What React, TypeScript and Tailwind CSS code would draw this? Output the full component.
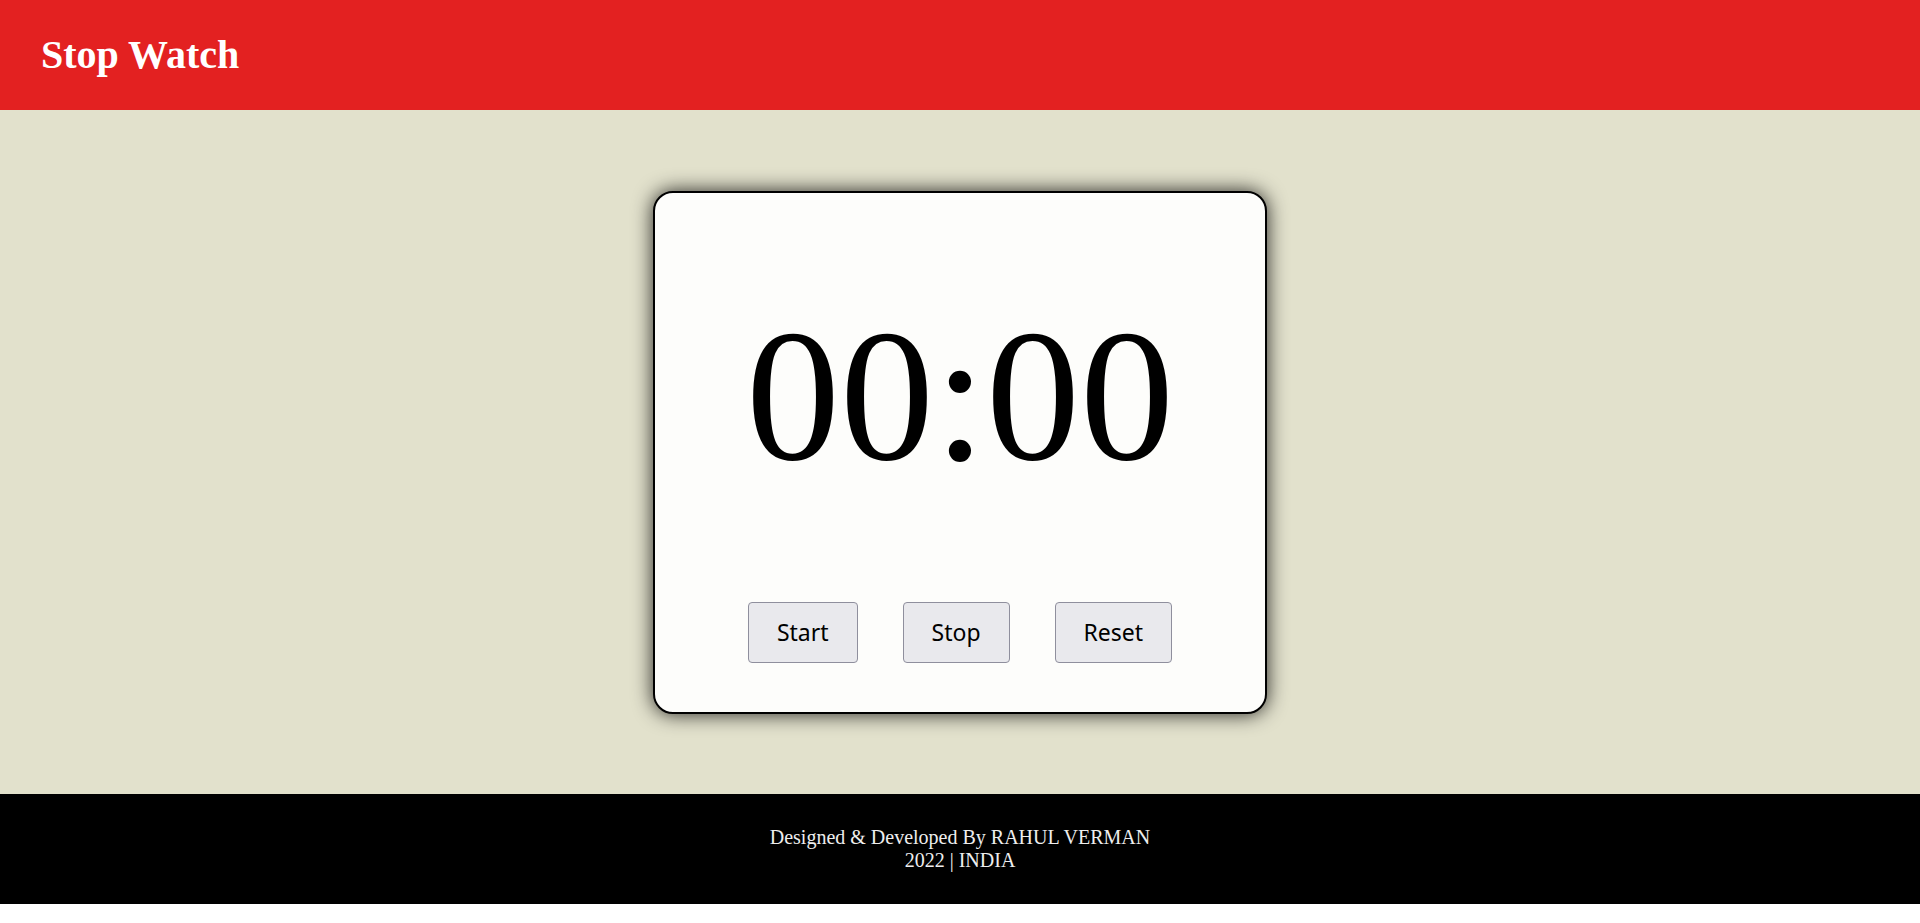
import { useEffect, useRef, useState } from "react";

function pad(n: number) {
    return n < 10 ? "0" + n : String(n);
}

export default function App() {
    const [seconds, setSeconds] = useState(0);
    const [running, setRunning] = useState(false);
    const timer = useRef<number | null>(null);

    useEffect(() => {
        if (!running) return;
        timer.current = window.setInterval(() => setSeconds((s) => s + 1), 1000);
        return () => {
            if (timer.current) window.clearInterval(timer.current);
        };
    }, [running]);

    const minutes = Math.floor(seconds / 60);
    const secs = seconds % 60;

    const btn =
        "h-[61px] px-[28px] rounded-[4px] border border-[#8f8f9d] bg-[#e9e9ed] text-[23px] text-black font-['Noto_Sans',sans-serif] hover:bg-[#d0d0d7]";

    return (
        <div className="w-full bg-white">
            <header className="h-[110px] bg-[#e32121] flex items-center px-[41px]">
                <h1 className="text-[40px] font-bold text-white font-['Liberation_Serif',serif] leading-normal">
                    Stop Watch
                </h1>
            </header>

            <main className="h-[684px] bg-[#e2e1cc] flex items-center justify-center">
                <div className="w-[614px] h-[523px] bg-[#fdfdfb] border-2 border-black rounded-[20px] shadow-[0_0_20px_rgba(0,0,0,0.85)] flex flex-col items-center pt-[62px]">
                    <div className="text-[188px] leading-normal text-black font-['Liberation_Serif',serif]">
                        {pad(minutes)}:{pad(secs)}
                    </div>
                    <div className="flex gap-[45px] mt-[65px]">
                        <button className={btn} onClick={() => setRunning(true)}>
                            Start
                        </button>
                        <button className={btn} onClick={() => setRunning(false)}>
                            Stop
                        </button>
                        <button
                            className={btn}
                            onClick={() => {
                                setRunning(false);
                                setSeconds(0);
                            }}
                        >
                            Reset
                        </button>
                    </div>
                </div>
            </main>

            <footer className="h-[110px] bg-black flex flex-col items-center justify-center text-[20px] leading-[23px] text-[#eeeeee] font-['Liberation_Serif',serif]">
                <p>Designed &amp; Developed By RAHUL VERMAN</p>
                <p>2022 | INDIA</p>
            </footer>
        </div>
    );
}
